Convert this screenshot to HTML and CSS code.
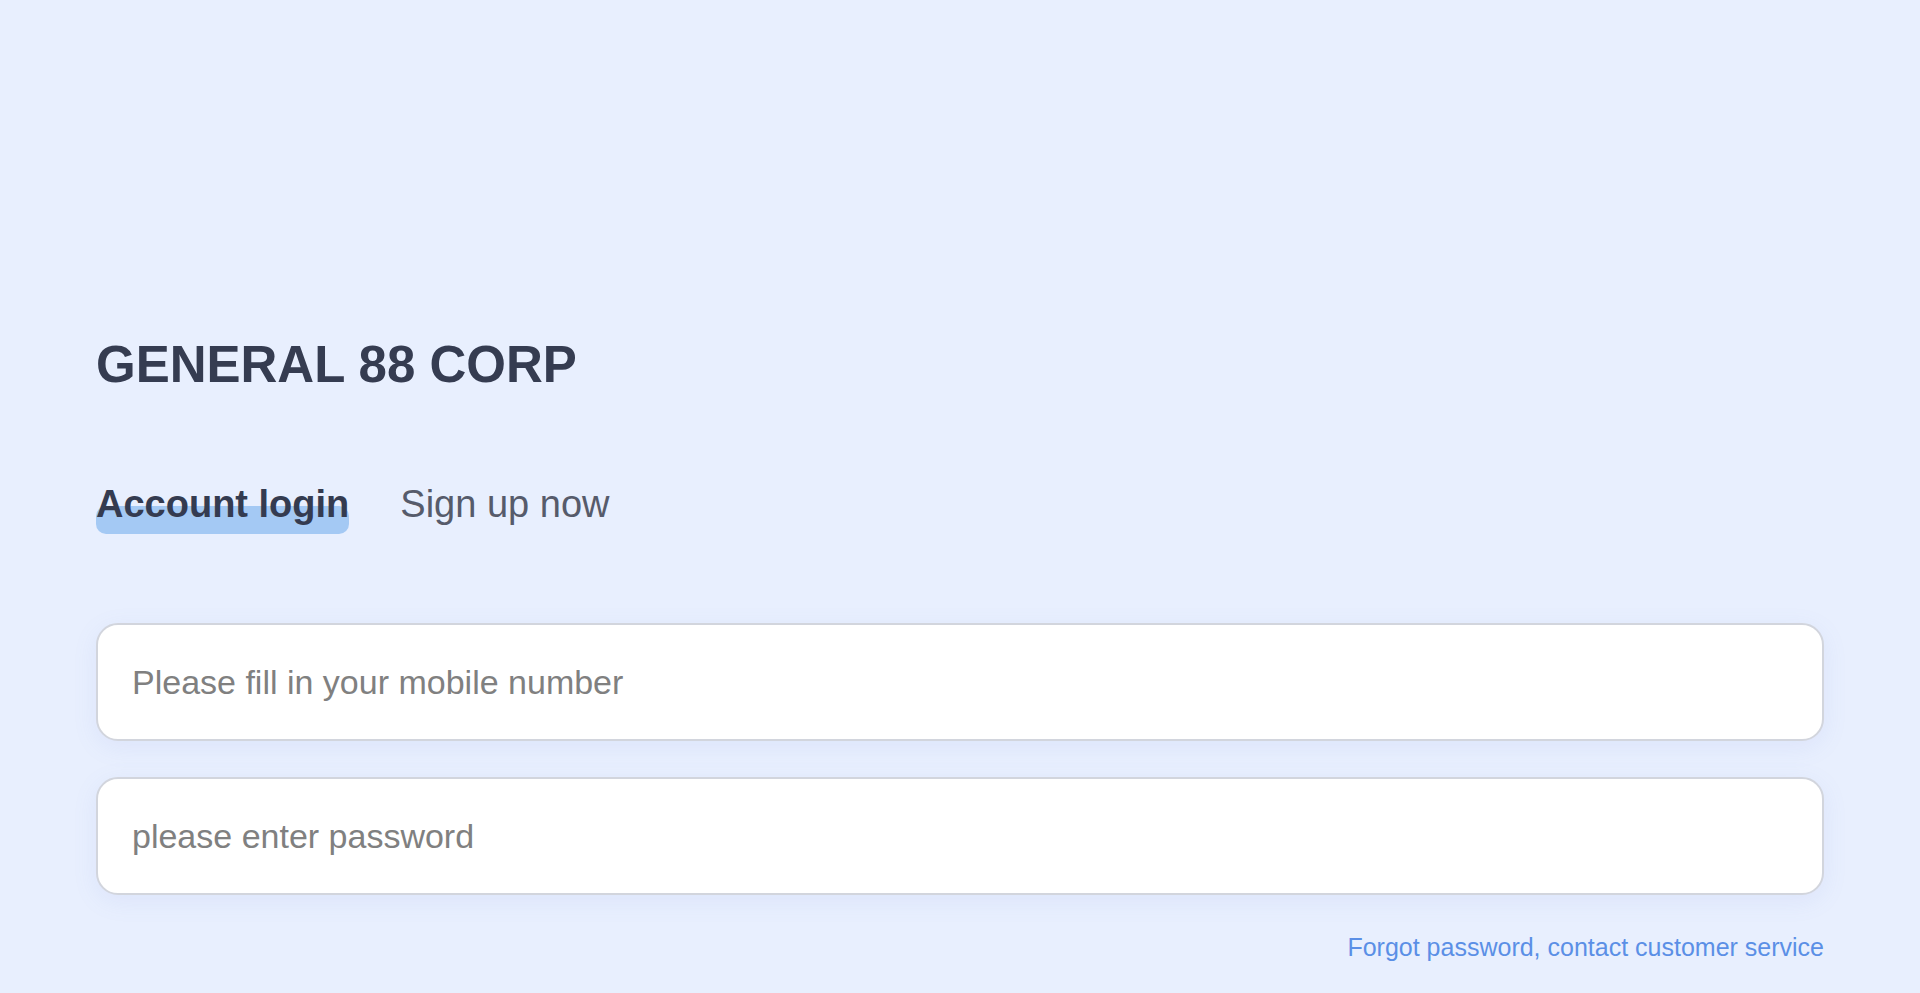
FILE: index.html
```html
<!DOCTYPE html>
<html lang="en">
<head>
<meta charset="utf-8">
<title>GENERAL 88 CORP</title>
<link rel="stylesheet" href="styles.css">
</head>
<body>
<main class="page">
  <h1 class="brand">GENERAL 88 CORP</h1>
  <nav class="tabs">
    <span class="tab tab-active">Account login</span>
    <span class="tab">Sign up now</span>
  </nav>
  <form class="form">
    <input class="field" type="tel" placeholder="Please fill in your mobile number">
    <input class="field" type="password" placeholder="please enter password">
  </form>
  <div class="help">
    <a class="help-link" href="#">Forgot password, contact customer service</a>
  </div>
</main>
</body>
</html>
```

FILE: styles.css
```css
html, body {
  margin: 0;
  padding: 0;
  background: #e8effe;
  font-family: "Liberation Sans", Arial, sans-serif;
}

.page {
  box-sizing: border-box;
  height: 993px;
  padding: 335px 96px 0;
  display: flex;
  flex-direction: column;
}

.brand {
  margin: 0;
  font-size: 51px;
  font-weight: 700;
  line-height: normal;
  color: #353c51;
}

.tabs {
  margin-top: 89px;
  display: flex;
  gap: 51px;
  align-items: flex-start;
}

.tab {
  font-size: 38px;
  line-height: normal;
  color: #565b6b;
  padding-bottom: 8px;
}

.tab-active {
  position: relative;
  isolation: isolate;
  font-weight: 700;
  color: #343b50;
}

.tab-active::before {
  content: "";
  position: absolute;
  left: 0;
  right: 0;
  bottom: 0;
  height: 28px;
  border-radius: 10px;
  background: #a4c9f4;
  z-index: -1;
}

.form {
  margin-top: 89px;
  display: flex;
  flex-direction: column;
  gap: 36px;
}

.field {
  box-sizing: border-box;
  height: 118px;
  width: 100%;
  padding: 0 34px;
  border: 2px solid #d2d5dd;
  border-radius: 22px;
  background: #ffffff;
  font-family: "Liberation Sans", Arial, sans-serif;
  font-size: 34px;
  color: #333;
  outline: none;
  box-shadow: 0 6px 24px rgba(120, 140, 220, 0.10);
}

.field::placeholder {
  color: #808080;
}

.help {
  margin-top: 38px;
  display: flex;
  justify-content: flex-end;
}

.help-link {
  font-size: 25px;
  line-height: normal;
  color: #5b8fe6;
  text-decoration: none;
}
```
